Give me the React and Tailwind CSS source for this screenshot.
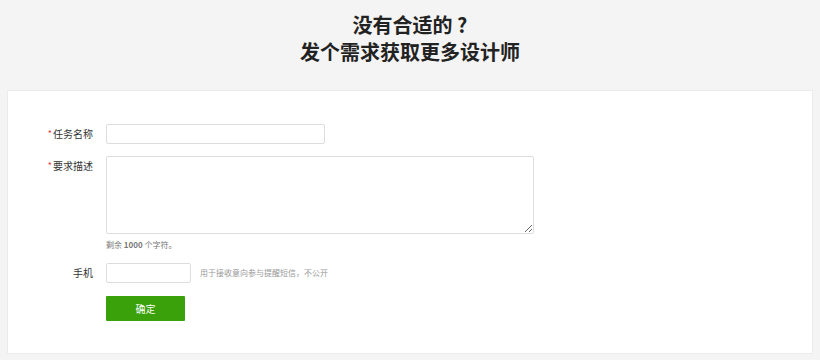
export default function App() {
  const font = { fontFamily: '"Microsoft YaHei", "Noto Sans CJK SC", "Liberation Sans", sans-serif' }

  return (
    <div className="w-[820px] h-[360px] bg-[#f4f4f4] overflow-hidden" style={font}>
      <div className="pt-[11px] h-[90px] text-center text-[20px] leading-[27px] font-bold text-[#222]">
        <div>没有合适的 ?</div>
        <div>发个需求获取更多设计师</div>
      </div>
      <div className="mx-[7px] h-[264px] bg-white border border-[#ebebeb] pt-[33px]">
        <div className="flex items-start">
          <label className="w-[98px] h-[20px] pr-[13px] text-right text-[10px] leading-[20px] text-[#333]">
            <span className="text-[#e4393c] text-[9px] relative -top-[1px] mr-[1px]">*</span>任务名称
          </label>
          <input className="w-[219px] h-[20px] border border-[#ddd] rounded-[2px] bg-white outline-none" />
        </div>
        <div className="flex items-start mt-[12px]">
          <label className="w-[98px] h-[20px] pr-[13px] text-right text-[10px] leading-[20px] text-[#333]">
            <span className="text-[#e4393c] text-[9px] relative -top-[1px] mr-[1px]">*</span>要求描述
          </label>
          <div>
            <textarea className="block w-[428px] h-[78px] border border-[#ddd] rounded-[2px] bg-white outline-none resize" />
            <div className="mt-[4px] h-[14px] text-[8px] leading-[14px] text-[#777]">剩余 <span className="font-bold">1000</span> 个字符。</div>
          </div>
        </div>
        <div className="flex items-center mt-[11px] h-[20px]">
          <label className="w-[98px] h-[20px] pr-[13px] text-right text-[10px] leading-[20px] text-[#333]">手机</label>
          <input className="w-[85px] h-[20px] border border-[#ddd] rounded-[2px] bg-white outline-none" />
          <span className="ml-[9px] text-[8px] leading-[20px] text-[#999]">用于接收意向参与提醒短信，不公开</span>
        </div>
        <div className="pl-[98px] mt-[13px]">
          <button className="block w-[79px] h-[25px] bg-[#3aa10b] text-white text-[10px] rounded-[1px]">确定</button>
        </div>
      </div>
    </div>
  )
}
